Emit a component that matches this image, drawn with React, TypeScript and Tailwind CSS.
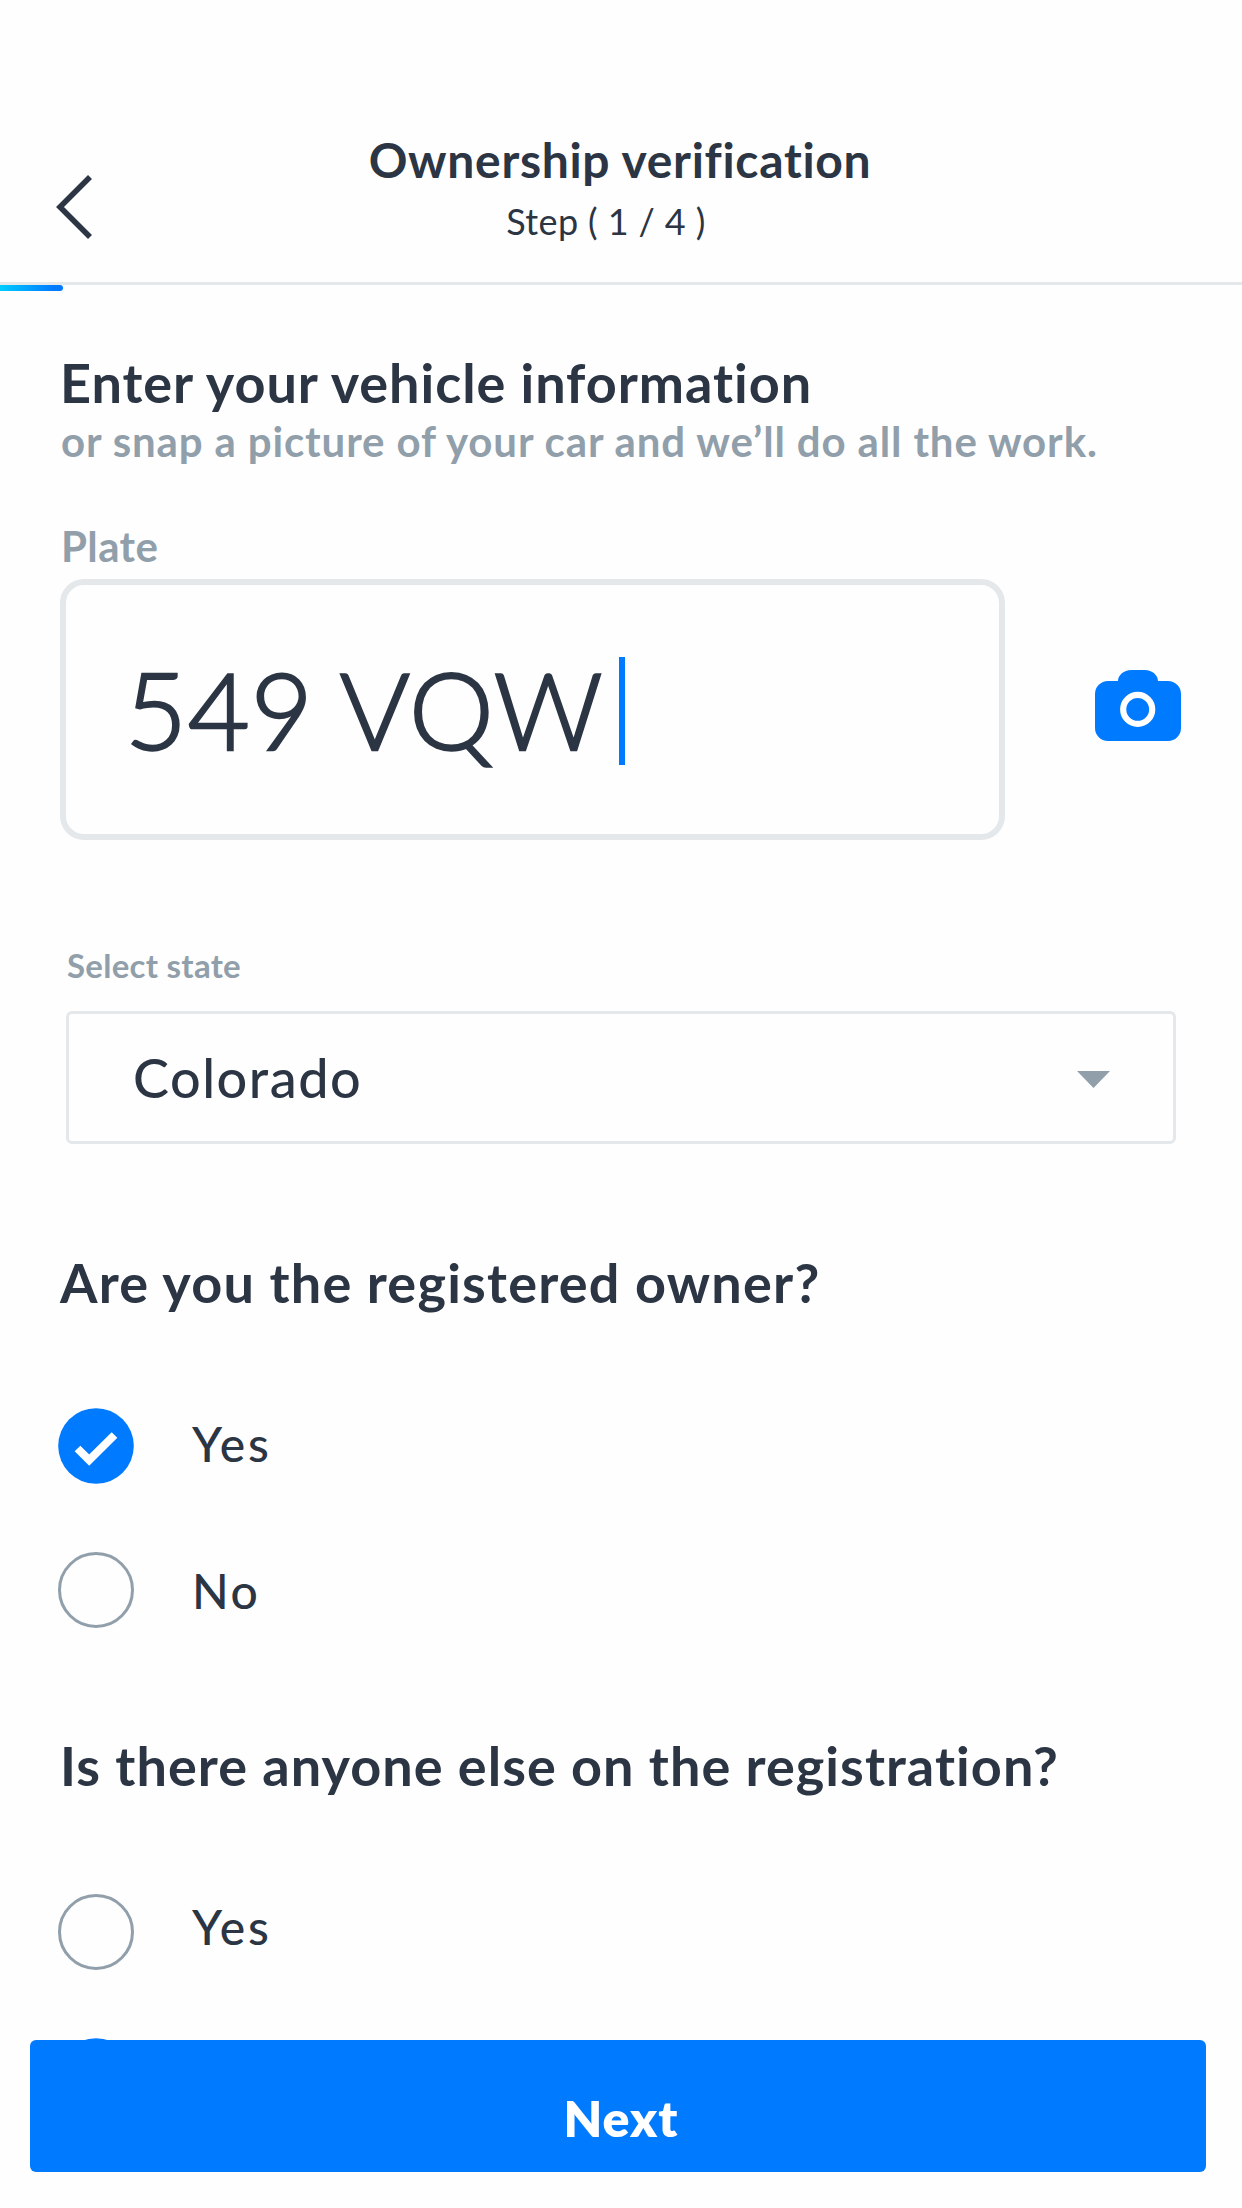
import React from "react";

function ChevronLeft() {
  return (
    <svg width="36" height="64" viewBox="0 0 36 64" fill="none" className="block">
      <path d="M34 2 L4 32 L34 62" stroke="#2b3543" strokeWidth="5.6" />
    </svg>
  );
}

function Camera() {
  return (
    <svg width="86" height="71" viewBox="0 0 86 71" className="block shrink-0">
      <path
        fill="#007aff"
        d="M13 11H23C23 5 29 0 36 0H50C57 0 63 5 63 11H73A13 13 0 0 1 86 24V58A13 13 0 0 1 73 71H13A13 13 0 0 1 0 58V24A13 13 0 0 1 13 11Z"
      />
      <circle cx="42.7" cy="39.4" r="14.5" fill="none" stroke="#fff" strokeWidth="6.2" />
    </svg>
  );
}

function Radio({ checked = false }: { checked?: boolean }) {
  if (!checked) {
    return <span className="block size-[76px] shrink-0 rounded-full border-3 border-[#919fab]" />;
  }
  return (
    <svg width="76" height="76" viewBox="0 0 76 76" className="block shrink-0">
      <circle cx="38" cy="38" r="37.8" fill="#007aff" />
      <path d="M19.5 40.5 L31.2 52.2 L56.5 27" fill="none" stroke="#fff" strokeWidth="8" />
    </svg>
  );
}

export default function App() {
  return (
    <div className="relative h-[2208px] w-[1242px] overflow-hidden bg-[#fefefe] font-['Lato',sans-serif] text-[#2b3543]">
      <header className="grid h-[285px] grid-cols-[140px_1fr_140px] border-b-3 border-[#e4e8eb]">
        <button className="flex items-start pt-[175px] pl-14" aria-label="Back">
          <ChevronLeft />
        </button>
        <div className="pt-[130px] text-center">
          <h1 className="pr-0.5 text-[48px] leading-[60px] font-bold tracking-[0.69px]">
            Ownership verification
          </h1>
          <p className="mt-[9px] pr-[30px] text-[36px] leading-[44px] tracking-[0.39px]">Step ( 1 / 4 )</p>
        </div>
      </header>
      <div className="h-1.5 w-[63px] rounded-r-full bg-linear-to-r from-[#00ccff] to-[#007aff] to-85%" />

      <main className="px-[60px] pt-[59px]">
        <h2 className="text-[54px] leading-[66px] font-bold tracking-[0.97px]">
          Enter your vehicle information
        </h2>
        <p className="pl-px text-[42px] leading-[50px] font-bold tracking-[0.86px] whitespace-nowrap text-[#919fab]">
          or snap a picture of your car and we’ll do all the work.
        </p>

        <label className="mt-[55px] block pl-px text-[42px] leading-[50px] font-bold tracking-[0.4px] text-[#919fab]">
          Plate
        </label>
        <div className="mt-[8px] flex items-center">
          <div className="flex h-[261px] w-[945px] items-center rounded-3xl border-6 border-[#e4e8eb] pl-[59px]">
            <span className="pb-0.5 text-[107px] leading-[128px] font-light tracking-[0.8px] [-webkit-text-stroke:2.4px_#2b3543]">
              549 VQW
            </span>
            <span className="mt-[3px] ml-[15px] h-[108px] w-1.5 bg-[#007aff]" />
          </div>
          <button className="mb-2 ml-[90px]" aria-label="Take a picture">
            <Camera />
          </button>
        </div>

        <label className="mt-[105px] block pl-[7px] text-[33px] leading-[40px] font-bold tracking-[0.27px] text-[#919fab]">
          Select state
        </label>
        <div className="mt-[26px] ml-1.5 flex h-[133px] w-[1110px] items-center justify-between rounded-md border-3 border-[#e4e8eb] pr-[63px] pl-16">
          <span className="text-[54px] leading-[66px] font-medium tracking-[1.5px]">Colorado</span>
          <svg width="33" height="17" viewBox="0 0 33 17" className="mt-[3px] block">
            <path d="M0 0H33L16.5 17Z" fill="#919fab" />
          </svg>
        </div>

        <h2 className="mt-[106px] text-[54px] leading-[66px] font-bold tracking-[1.22px]">
          Are you the registered owner?
        </h2>
        <div className="mt-[92px] -ml-0.5 flex h-[76px] items-center gap-[58px]">
          <Radio checked />
          <span className="pb-[5px] text-[48px] leading-[60px] font-medium tracking-[2.8px]">Yes</span>
        </div>
        <div className="mt-[68px] -ml-0.5 flex h-[76px] items-center gap-[58px]">
          <Radio />
          <span className="pt-0.5 text-[48px] leading-[60px] font-medium tracking-[2.5px]">No</span>
        </div>

        <h2 className="mt-[105px] text-[54px] leading-[66px] font-bold tracking-[1.05px] whitespace-nowrap">
          Is there anyone else on the registration?
        </h2>
        <div className="mt-[95px] -ml-0.5 flex h-[76px] items-center gap-[58px]">
          <Radio />
          <span className="pb-[10px] text-[48px] leading-[60px] font-medium tracking-[2.8px]">Yes</span>
        </div>
        <div className="mt-[68px] -ml-0.5 flex h-[76px] items-center">
          <Radio checked />
        </div>
      </main>

      <button className="absolute bottom-9 left-[30px] h-[132px] w-[1176px] rounded-md bg-[#007aff] pt-[23px] pl-1.5 text-[50px] leading-[60px] font-extrabold tracking-[1px] text-white">
        Next
      </button>
    </div>
  );
}
